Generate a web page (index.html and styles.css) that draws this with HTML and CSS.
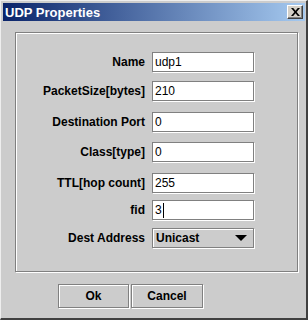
FILE: index.html
```html
<!DOCTYPE html>
<html lang="en">
<head>
    <meta charset="UTF-8">
    <title>UDP Properties</title>
    <link rel="stylesheet" href="styles.css">
</head>
<body>
    <div class="window">
        <div class="titlebar">
            <span class="title">UDP Properties</span>
            <span class="close">
                <svg width="9" height="8" viewBox="0 0 9 8"><path d="M0 0h2.2l2.3 2.8L6.8 0H9L5.6 4 9 8H6.8L4.5 5.2 2.2 8H0l3.4-4z" fill="#000"/></svg>
            </span>
        </div>

        <div class="panel">
            <div class="form">
                <label>Name</label>
                <div class="field">udp1</div>

                <label>PacketSize[bytes]</label>
                <div class="field">210</div>

                <label>Destination Port</label>
                <div class="field">0</div>

                <label>Class[type]</label>
                <div class="field">0</div>

                <label>TTL[hop count]</label>
                <div class="field">255</div>

                <label>fid</label>
                <div class="field">3<span class="caret"></span></div>

                <label>Dest Address</label>
                <div class="combo">
                    <span>Unicast</span>
                    <span class="arrow"></span>
                </div>
            </div>
        </div>

        <div class="buttons">
            <button class="btn">Ok</button>
            <button class="btn">Cancel</button>
        </div>
    </div>
</body>
</html>
```

FILE: styles.css
```css
* {
    box-sizing: border-box;
    margin: 0;
    padding: 0;
}

body {
    font-family: 'Liberation Sans', Arial, sans-serif;
    font-size: 12px;
    background: #cccccc;
}

.window {
    width: 308px;
    height: 320px;
    background: #cccccc;
    border-style: solid;
    border-width: 1px 2px 2px 1px;
    border-color: #eeeeee #404040 #404040 #eeeeee;
    padding: 2px 1px 0 2px;
}

.titlebar {
    height: 18px;
    display: flex;
    align-items: center;
    justify-content: space-between;
    padding: 0 2px 0 2px;
    background: linear-gradient(to right, #0a246a, #a6caf0);
}

.title {
    color: #ffffff;
    font-weight: bold;
    font-size: 13px;
}

.close {
    width: 16px;
    height: 14px;
    display: flex;
    align-items: center;
    justify-content: center;
    background: #d4d0c8;
    border-style: solid;
    border-width: 1px;
    border-color: #ffffff #404040 #404040 #ffffff;
    box-shadow: inset -1px -1px 0 #808080;
}

.panel {
    margin: 11px 0 0 12px;
    width: 283px;
    height: 240px;
    border: 1px solid #808080;
    box-shadow: inset 1px 1px 0 #ffffff, 1px 1px 0 #ffffff;
    padding: 19px 0 0 1px;
}

.form {
    display: grid;
    grid-template-columns: 128px 102px;
    grid-template-rows: 29px 31px 30px 31px 27px 28px 20px;
    column-gap: 7px;
    align-items: start;
}

.form label {
    text-align: right;
    font-weight: bold;
    color: #000000;
    font-size: 12px;
    line-height: 20px;
}

.field {
    height: 20px;
    background: #ffffff;
    border: 1px solid #808080;
    box-shadow: 1px 1px 0 #ffffff;
    padding: 0 2px;
    line-height: 18px;
    display: flex;
    align-items: center;
}

.caret {
    width: 1px;
    height: 15px;
    background: #000000;
    margin-left: 1px;
}

.combo {
    height: 20px;
    border: 1px solid #808080;
    box-shadow: 1px 1px 0 #ffffff, inset 1px 1px 0 #ffffff;
    display: flex;
    align-items: center;
    justify-content: space-between;
    padding: 0 6px 0 3px;
    font-weight: bold;
}

.arrow {
    width: 0;
    height: 0;
    border-left: 6px solid transparent;
    border-right: 6px solid transparent;
    border-top: 6px solid #000000;
}

.buttons {
    display: flex;
    gap: 2px;
    margin: 12px 0 0 55px;
}

.btn {
    height: 24px;
    font-family: 'Liberation Sans', Arial, sans-serif;
    font-size: 12px;
    font-weight: bold;
    color: #000000;
    background: #cccccc;
    border: 1px solid #808080;
    box-shadow: inset 1px 1px 0 #ffffff, 1px 1px 0 #ffffff;
}

.btn:first-child {
    width: 71px;
}

.btn:last-child {
    width: 72px;
}
```
